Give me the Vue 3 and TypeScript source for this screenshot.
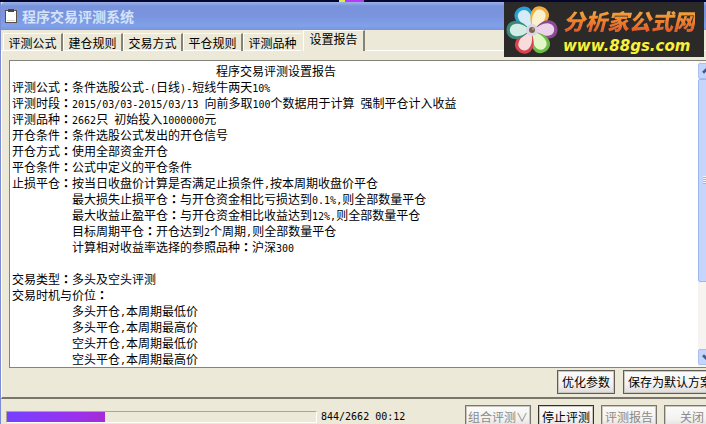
<script setup lang="ts">
import { computed, ref } from 'vue'

interface Line {
  text: string
  kind?: 'heading' | 'indent'
}

interface Segment {
  text: string
  kind: 'han' | 'latin' | 'colon'
}

const tabs = ['评测公式', '建仓规则', '交易方式', '平仓规则', '评测品种', '设置报告']
const activeTab = ref('设置报告')

const lines: Line[] = [
  { text: '程序交易评测设置报告', kind: 'heading' },
  { text: '评测公式：条件选股公式-(日线)-短线牛两天10%' },
  { text: '评测时段：2015/03/03-2015/03/13 向前多取100个数据用于计算 强制平仓计入收益' },
  { text: '评测品种：2662只 初始投入1000000元' },
  { text: '开仓条件：条件选股公式发出的开仓信号' },
  { text: '开仓方式：使用全部资金开仓' },
  { text: '平仓条件：公式中定义的平仓条件' },
  { text: '止损平仓：按当日收盘价计算是否满足止损条件,按本周期收盘价平仓' },
  { text: '最大损失止损平仓：与开仓资金相比亏损达到0.1%,则全部数量平仓', kind: 'indent' },
  { text: '最大收益止盈平仓：与开仓资金相比收益达到12%,则全部数量平仓', kind: 'indent' },
  { text: '目标周期平仓：开仓达到2个周期,则全部数量平仓', kind: 'indent' },
  { text: '计算相对收益率选择的参照品种：沪深300', kind: 'indent' },
  { text: '' },
  { text: '交易类型：多头及空头评测' },
  { text: '交易时机与价位：' },
  { text: '多头开仓,本周期最低价', kind: 'indent' },
  { text: '多头平仓,本周期最高价', kind: 'indent' },
  { text: '空头开仓,本周期最低价', kind: 'indent' },
  { text: '空头平仓,本周期最高价', kind: 'indent' },
]

// Latin runs are set half as wide as a Han character, colons are centred in their cell.
function segments(text: string): Segment[] {
  const parts = text.match(/[\x20-\x7e]+|：|[^\x20-\x7e：]+/g) ?? []
  return parts.map((part) => ({
    text: part,
    kind: part === '：' ? 'colon' : /^[\x20-\x7e]/.test(part) ? 'latin' : 'han',
  }))
}

const done = ref(844)
const total = ref(2662)
const elapsed = ref('00:12')
const progress = computed(() => `${(done.value / total.value) * 100}%`)

const petals = [
  { angle: -30, rim: '#2a9fd6', inner: '#d3ecf8' },
  { angle: 28, rim: '#eeb040', inner: '#fbf1cf' },
  { angle: 88, rim: '#8a4a94', inner: '#ecd3ec' },
  { angle: 148, rim: '#6cbc45', inner: '#e2f6c9' },
  { angle: 208, rim: '#d94452', inner: '#f8dcdc' },
  { angle: 270, rim: '#3b8878', inner: '#d3ece6' },
]
</script>

<template>
  <div class="screen">
    <div class="backdrop"><i class="spark yellow"></i><i class="spark purple"></i></div>
    <main class="window">
      <header class="titlebar">
        <svg class="app-icon" viewBox="0 0 12 14" aria-hidden="true">
          <rect x="0.5" y="1.5" width="11" height="12" fill="#fff" stroke="#5c4f4a" />
          <rect x="3" y="0" width="6" height="3" fill="#4b4444" />
          <path d="M2 11h8v1H2z" fill="#ded8cf" />
        </svg>
        <h1>程序交易评测系统</h1>
      </header>

      <nav class="tabs" role="tablist">
        <button
          v-for="tab in tabs"
          :key="tab"
          type="button"
          role="tab"
          :class="['tab', { active: tab === activeTab }]"
          :aria-selected="tab === activeTab"
          @click="activeTab = tab"
        >{{ tab }}</button>
      </nav>

      <section class="page">
        <div class="report">
          <div class="text">
            <p v-for="(line, i) in lines" :key="i" :class="line.kind"><span
              v-for="(part, j) in segments(line.text)" :key="j" :class="part.kind">{{ part.text }}</span></p>
          </div>
          <div class="scrollbar">
            <button type="button" class="arrow" aria-label="向上">
              <svg viewBox="0 0 17 16"><path d="M4 10l4.500-4.500L13 10" /></svg>
            </button>
            <div class="rail"><div class="thumb"><i></i></div></div>
            <button type="button" class="arrow" aria-label="向下">
              <svg viewBox="0 0 17 16"><path d="M4 6l4.500 4.500L13 6" /></svg>
            </button>
          </div>
        </div>
        <div class="actions">
          <button type="button" class="push">优化参数</button>
          <button type="button" class="push">保存为默认方案</button>
        </div>
      </section>

      <footer class="status">
        <div class="track" role="progressbar" :aria-valuenow="done" :aria-valuemax="total">
          <div class="fill" :style="{ width: progress }"></div>
        </div>
        <span class="count">{{ done }}/{{ total }} {{ elapsed }}</span>
        <div class="commands">
          <button type="button" class="push wide" disabled>组合评测∨</button>
          <button type="button" class="push strong">停止评测</button>
          <button type="button" class="push" disabled>评测报告</button>
          <button type="button" class="push" disabled>关闭</button>
        </div>
      </footer>
    </main>

    <aside class="brand">
      <svg class="flower" viewBox="0 0 52 52" aria-hidden="true">
        <g v-for="petal in petals" :key="petal.angle" :transform="`translate(26 26) rotate(${petal.angle})`">
          <path d="M0-2C-5-6-10-12-9-18C-8-28 8-28 9-18C10-12 5-6 0-2Z" :fill="petal.rim" />
          <path d="M0-2C-4-6-7-12-6-17C-5-24 5-24 6-17C7-12 4-6 0-2Z" :fill="petal.inner" />
        </g>
        <circle cx="26" cy="26" r="6" fill="#ddd5df" />
        <circle cx="26" cy="26" r="3" fill="#75645c" />
        <circle cx="27" cy="25" r="1" fill="#d99a4c" />
      </svg>
      <div class="brand-text">
        <strong>分析家公式网</strong>
        <em>www.88gs.com</em>
      </div>
    </aside>
  </div>
</template>

<style>
body {
  margin: 0;
}
</style>

<style scoped>
.screen {
  position: relative;
  height: 100vh;
  overflow: hidden;
  background: #ece9d8;
  color: #000;
  font-family: "Noto Sans CJK SC", sans-serif;
  font-size: 12px;
  line-height: 16px;
}

button {
  box-sizing: border-box;
  margin: 0;
  color: inherit;
  font: inherit;
  white-space: nowrap;
}

.backdrop {
  display: flex;
  height: 2px;
  padding-left: 48%;
  background: #05052c;
}

.spark {
  width: 6px;
}

.yellow {
  background: #dcec58;
}

.purple {
  width: 19px;
  background: #b63cf4;
}

/* The window is wider than the view and runs off its right edge. */
.window {
  margin-right: -20px;
  border-left: 1px solid #7b8cd4;
}

.titlebar {
  display: flex;
  align-items: center;
  gap: 5px;
  height: 28px;
  padding-left: 4px;
  border-radius: 4px 0 0 0;
  background: linear-gradient(#9bb3e8 0, #7893dc 4px, #7a94de 14px, #80a2ea 24px, #7993dc 28px);
}

.app-icon {
  width: 12px;
  height: 14px;
}

h1 {
  margin: 0;
  color: #d5e3fa;
  font-size: 14px;
  font-weight: 700;
  line-height: 20px;
}

.tabs {
  display: flex;
  align-items: flex-end;
  height: 21px;
  padding: 0 0 0 2px;
  box-shadow: inset 0 -1px #fff;
}

.tab {
  width: 60px;
  height: 18px;
  padding: 0;
  border: 0;
  border-top: 1px solid #fbfaf3;
  border-right: 2px solid #858277;
  border-left: 1px solid #fff;
  background: #ece9d8;
  box-shadow: inset 0 -1px #fff;
  line-height: 16px;
}

.tab:nth-last-child(2) {
  border-right-color: #ece9d8;
}

.tab.active {
  width: 62px;
  height: 21px;
  padding-bottom: 4px;
  box-shadow: none;
}

.page {
  padding: 9px 9px 0 7px;
  border-left: 1px solid #fff;
  border-bottom: 2px solid #78756a;
}

.report {
  display: flex;
  border: 1px solid #85847c;
  background: #fff;
}

.text {
  flex: 1;
  min-width: 0;
  padding: 2px 0 0 2px;
  white-space: pre;
}

.text p {
  height: 16px;
  margin: 0;
}

.text .heading {
  padding-left: 204px;
}

.text .indent {
  padding-left: 60px;
}

.latin,
.count {
  font-family: "DejaVu Sans Mono", monospace;
  font-size: 10px;
}

.colon {
  font-family: "Noto Sans CJK TC", sans-serif;
  font-weight: 700;
}

.scrollbar {
  display: flex;
  flex-direction: column;
  width: 18px;
  padding: 2px 0;
  background: #f6f4f0;
}

.arrow {
  height: 16px;
  padding: 0;
  border: 1px solid #a9bff0;
  border-radius: 2px;
  background: #c4d5fc;
}

.arrow svg {
  display: block;
  width: 16px;
  height: 14px;
}

.arrow path {
  fill: none;
  stroke: #42588c;
  stroke-width: 3;
}

.rail {
  flex: 1;
}

.thumb {
  display: flex;
  align-items: center;
  justify-content: center;
  box-sizing: border-box;
  height: 75%;
  border: 1px solid #9db7ec;
  border-radius: 2px;
  background: #c5d5fc;
}

.thumb i {
  width: 8px;
  height: 8px;
  background: repeating-linear-gradient(#f0f5ff 0 1px, #9db3e8 1px 2px);
}

.actions {
  display: flex;
  justify-content: flex-end;
  gap: 8px;
  padding: 2px 0 3px;
}

.push {
  flex: none;
  height: 24px;
  padding: 0 4px;
  border: 1px solid #5f5d55;
  background: linear-gradient(#fbfbf9, #f3f2f0 60%, #dddcdc);
  box-shadow: inset 0 0 0 1px #c9c7bf;
}

.push:disabled {
  border-color: #77756c;
  color: #8b8a86;
}

.strong {
  border-color: #33322e;
}

.status {
  display: flex;
  align-items: flex-start;
  padding: 6px 6px 0 5px;
}

.track {
  flex: 0 1 311px;
  box-sizing: border-box;
  height: 12px;
  margin-top: 6px;
  border: 1px solid #fff;
  border-top-color: #aaa797;
  border-left-color: #aaa797;
}

.fill {
  height: 10px;
  background: linear-gradient(90deg, #7441ff, #9b31ee 70%, #a52cd5);
}

.count {
  flex: 1;
  margin: 4px 0 0 4px;
  white-space: pre;
}

.commands {
  display: flex;
  gap: 7px;
}

.commands .push {
  width: 56px;
  padding: 0;
}

.commands .wide {
  width: 66px;
}

.brand {
  position: absolute;
  top: 2px;
  right: 2px;
  display: flex;
  align-items: center;
  box-sizing: border-box;
  width: 200px;
  height: 55px;
  padding-left: 1px;
  background: #2b2a29;
}

.flower {
  flex: none;
  width: 54px;
  height: 52px;
}

.brand-text {
  display: flex;
  flex-direction: column;
  padding-left: 4px;
  white-space: nowrap;
}

.brand-text strong {
  background: linear-gradient(#f7c04c, #ef8530 50%, #d94b2b);
  background-clip: text;
  color: transparent;
  font-size: 22px;
  font-style: italic;
  font-weight: 900;
  line-height: 32px;
}

.brand-text em {
  color: #fbf03a;
  font-family: "DejaVu Sans", sans-serif;
  font-size: 15px;
  font-weight: 700;
  line-height: 20px;
}
</style>
